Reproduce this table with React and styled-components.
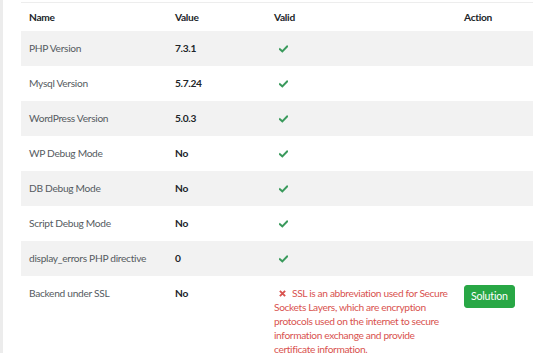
import React from "react";
import styled, { createGlobalStyle } from "styled-components";

const Global = createGlobalStyle`
  html, body { margin: 0; padding: 0; background: #ffffff; }
  body { font-family: "Segoe UI", Lato, "Open Sans", sans-serif; }
`;

const Page = styled.div`
  height: 353px;
  overflow: hidden;
  border-left: 3px solid #ececec;
  padding: 2px 0 0 18px;
  box-sizing: border-box;
`;

const Card = styled.div`
  width: 512px;
  border-top: 1px solid #ededed;
`;

const Table = styled.table`
  width: 512px;
  border-collapse: collapse;
  table-layout: fixed;
  font-size: 10.2px;
  letter-spacing: -0.3px;
  line-height: 16px;
  color: #212529;
`;

const Th = styled.th`
  box-sizing: border-box;
  text-align: left;
  font-weight: 700;
  padding: 6px 8px;
  color: #212529;
  width: ${(p) => p.$w}px;
`;

const Row = styled.tr`
  background: ${(p) => (p.$striped ? "#f2f2f2" : "#ffffff")};
`;

const NameCell = styled.td`
  padding: 9px 8px 10px;
  vertical-align: top;
  color: #555b61;
`;

const ValueCell = styled.td`
  padding: 9px 8px 10px;
  vertical-align: top;
  font-weight: 700;
  color: #212529;
`;

const ValidCell = styled.td`
  padding: 9px 2px 10px 8px;
  vertical-align: top;
`;

const ActionCell = styled.td`
  padding: 9px 8px 10px;
  vertical-align: top;
`;

const Check = styled.svg`
  display: inline-block;
  width: 9px;
  height: 8px;
  margin-left: 5px;
  vertical-align: -1px;
`;

const ErrorText = styled.div`
  color: #d9534f;
  letter-spacing: -0.35px;
  line-height: 14px;
  padding-top: 1px;
`;

const Cross = styled.svg`
  display: inline-block;
  width: 7px;
  height: 7px;
  margin: 0 6px 0 5px;
  vertical-align: 0px;
`;

const Button = styled.button`
  display: inline-block;
  vertical-align: top;
  font-family: inherit;
  font-size: 10.6px;
  letter-spacing: -0.2px;
  line-height: 15px;
  color: #ffffff;
  background: #28a745;
  border: 1px solid #28a745;
  border-radius: 3px;
  padding: 3px 6px;
  cursor: pointer;
`;

const CheckIcon = () => (
  <Check viewBox="0 0 10 8">
    <path d="M1 4.2 L3.7 6.6 L9 1.2" fill="none" stroke="#3a9a5c" strokeWidth="2.2" strokeLinecap="square" />
  </Check>
);

const CrossIcon = () => (
  <Cross viewBox="0 0 8 8">
    <path d="M1 1 L7 7 M7 1 L1 7" fill="none" stroke="#d9534f" strokeWidth="2.2" />
  </Cross>
);

const rows = [
  ["PHP Version", "7.3.1"],
  ["Mysql Version", "5.7.24"],
  ["WordPress Version", "5.0.3"],
  ["WP Debug Mode", "No"],
  ["DB Debug Mode", "No"],
  ["Script Debug Mode", "No"],
  ["display_errors PHP directive", "0"],
];

export default function App() {
  return (
    <>
      <Global />
      <Page>
        <Card>
          <Table>
            <thead>
              <tr>
                <Th $w={146}>Name</Th>
                <Th $w={99}>Value</Th>
                <Th $w={190}>Valid</Th>
                <Th $w={77}>Action</Th>
              </tr>
            </thead>
            <tbody>
              {rows.map(([n, v], i) => (
                <Row key={n} $striped={i % 2 === 0}>
                  <NameCell>{n}</NameCell>
                  <ValueCell>{v}</ValueCell>
                  <ValidCell><CheckIcon /></ValidCell>
                  <ActionCell />
                </Row>
              ))}
              <Row $striped={false}>
                <NameCell>Backend under SSL</NameCell>
                <ValueCell>No</ValueCell>
                <ValidCell>
                  <ErrorText>
                    <CrossIcon />
                    SSL is an abbreviation used for Secure Sockets Layers, which are encryption protocols used on the internet to secure information exchange and provide certificate information.
                  </ErrorText>
                </ValidCell>
                <ActionCell>
                  <Button>Solution</Button>
                </ActionCell>
              </Row>
            </tbody>
          </Table>
        </Card>
      </Page>
    </>
  );
}
